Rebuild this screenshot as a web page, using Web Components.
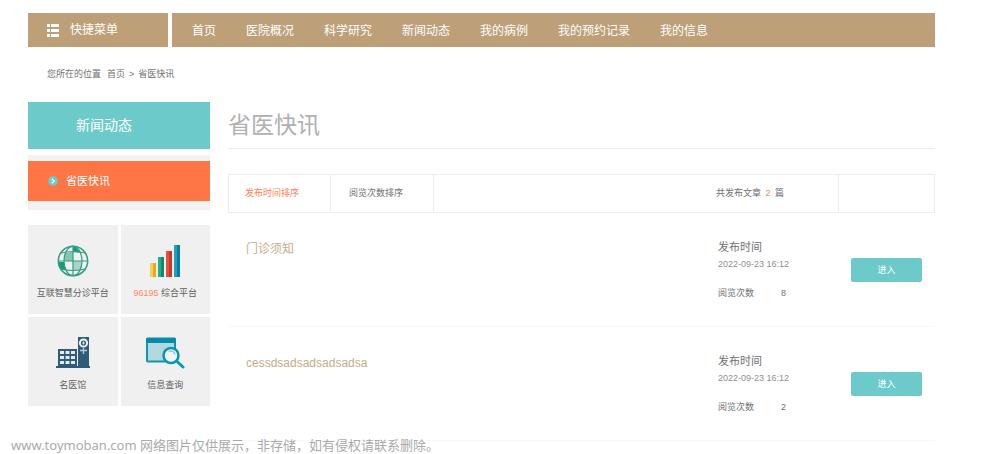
<!DOCTYPE html>
<html lang="zh-CN">
<head>
<meta charset="utf-8">
<meta name="viewport" content="width=device-width, initial-scale=1">
<title>省医快讯</title>
<style>
  body {
    margin: 0;
    background: #fff;
    --tan: #bda078;
    --teal: #6ccbca;
    --orange: #ff7646;
    --panel: #f0f0f0;
    --line: #ededed;
    font: 9px/16px "Liberation Sans", "Noto Sans CJK SC", sans-serif;
    color: #707070;
  }
</style>
</head>
<body>
<hospital-page>
  <top-bar slot="header"></top-bar>
  <bread-crumb slot="header"></bread-crumb>
  <side-menu slot="side" heading="新闻动态"><a href="#news">省医快讯</a></side-menu>
  <tile-grid slot="side">
    <service-tile icon="globe">互联智慧分诊平台</service-tile>
    <service-tile icon="bars"><b>96195</b> 综合平台</service-tile>
    <service-tile icon="clinic">名医馆</service-tile>
    <service-tile icon="search">信息查询</service-tile>
  </tile-grid>
  <page-title>省医快讯</page-title>
  <sort-bar total="2"></sort-bar>
  <news-item date="2022-09-23 16:12" views="8">门诊须知</news-item>
  <news-item date="2022-09-23 16:12" views="2">cessdsadsadsadsadsa</news-item>
  <site-note slot="note">www.toymoban.com 网络图片仅供展示，非存储，如有侵权请联系删除。</site-note>
</hospital-page>

<script>
const define = (name, render) => customElements.define(name, class extends HTMLElement {
  connectedCallback() {
    if (this.shadowRoot) return;
    const template = document.createElement('template');
    template.innerHTML = render(this);
    this.attachShadow({ mode: 'open' }).append(template.content.cloneNode(true));
  }
});

define('hospital-page', () => `
  <style>
    :host { display: block; position: relative; min-height: 100vh; box-sizing: border-box; padding: 13px 65px 0 28px; }
    .columns { display: grid; grid-template-columns: 182px minmax(0, 1fr); gap: 18px; align-items: start; }
  </style>
  <header><slot name="header"></slot></header>
  <div class="columns">
    <aside><slot name="side"></slot></aside>
    <main><slot></slot></main>
  </div>
  <slot name="note"></slot>`);

define('top-bar', () => `
  <style>
    :host { display: grid; grid-template-columns: 140px minmax(0, 1fr); gap: 4px; font-size: 12px; line-height: 34px; color: #fff; }
    button { display: flex; align-items: center; gap: 11px; padding: 0 19px; border: 0; background: var(--tan); color: inherit; font: inherit; text-align: left; }
    nav { display: flex; gap: 30px; padding: 2px 20px 0; background: var(--tan); white-space: nowrap; }
    nav a { color: inherit; text-decoration: none; line-height: 32px; }
  </style>
  <button type="button">
    <svg width="12" height="13" viewBox="0 0 12 13" fill="#fff" aria-hidden="true"><path d="M0 0h3v3H0zM4 0h8v3H4zM0 5h3v3H0zM4 5h8v3H4zM0 10h3v3H0zM4 10h8v3H4z"/></svg>
    <span>快捷菜单</span>
  </button>
  <nav>${['首页', '医院概况', '科学研究', '新闻动态', '我的病例', '我的预约记录', '我的信息']
    .map(t => `<a href="#">${t}</a>`).join('')}</nav>`);

define('bread-crumb', () => `
  <style>
    :host { display: block; padding: 0 19px; line-height: 55px; }
    nav { display: flex; gap: 4px; }
    span:first-child { margin-right: 2px; }
    a { color: inherit; text-decoration: none; }
  </style>
  <nav><span>您所在的位置</span><a href="#">首页</a><span>&gt;</span><a href="#">省医快讯</a></nav>`);

define('side-menu', el => `
  <style>
    :host { display: block; }
    h2 { margin: 0 0 6px; padding-left: 48px; background: var(--teal); color: #fff; font-size: 14px; font-weight: 400; line-height: 47px; }
    .list { padding: 6px 0 9px; background: #f2f2f2; }
    .item { display: flex; align-items: center; gap: 8px; padding: 0 20px; background: var(--orange); color: #fff; font-size: 11px; line-height: 40px; }
    ::slotted(a) { color: inherit; text-decoration: none; }
  </style>
  <h2>${el.getAttribute('heading')}</h2>
  <div class="list"><div class="item">
    <svg width="10" height="10" viewBox="0 0 10 10" aria-hidden="true"><circle cx="5" cy="5" r="4.8" fill="#6ccbca"/><path d="M3.8 2.7 6.2 5 3.8 7.3" fill="none" stroke="#fff" stroke-width="1.3"/></svg>
    <slot></slot>
  </div></div>`);

define('tile-grid', () => `
  <style>
    :host { display: grid; grid-template-columns: 1fr 1fr; gap: 3px; margin-top: 15px; }
  </style>
  <slot></slot>`);

const icons = {
  globe: `<svg width="32" height="32" viewBox="0 0 32 32" fill="none" stroke="#2f9f82" stroke-width="1.2">
    <path d="M8.500 8Q12 7 16 7v9H7Q7 12 8.500 8z" fill="#86c5b2" stroke="none"/>
    <path d="M16 16h9q0 5-1.500 8-3 1-7.500 1z" fill="#a9d4c7" stroke="none"/>
    <path d="M16 1q5 2 7 7-3-1-7-1zM1 17h6q0 4 2 7l-5 1q-3-4-3-8z" fill="#1c9878" stroke="none"/>
    <circle cx="16" cy="16" r="14.7" stroke-width="1.5"/>
    <ellipse cx="16" cy="16" rx="9" ry="14.7"/>
    <path d="M16 1v30M1 16h30M4 8q12-3 24 0M4 24q12 3 24 0"/></svg>`,
  bars: `<svg width="32" height="34" viewBox="0 0 32 34">
    <path d="M1 19h3v14H1z" fill="#f6cf57"/><path d="M4 19h3v14H4z" fill="#e7a922"/>
    <path d="M9 13h3v20H9z" fill="#28ac8b"/><path d="M12 13h3v20h-3z" fill="#128c70"/>
    <path d="M17 7h3v26h-3z" fill="#e65240"/><path d="M20 7h3v26h-3z" fill="#c53c2d"/>
    <path d="M25 1h3v32h-3z" fill="#259fbd"/><path d="M28 1h3v32h-3z" fill="#087da1"/></svg>`,
  clinic: `<svg width="34" height="34" viewBox="0 0 34 34">
    <path d="M2 13h19v17H2zM22 1h11v29H22zM0 30h34v2H0z" fill="#2f5b79"/>
    <path d="M4 15h4v3H4zM9.500 15h4v3h-4zM15 15h4v3h-4zM4 20h4v3H4zM9.500 20h4v3h-4zM15 20h4v3h-4zM4 25h4v3H4zM9.500 25h4v3h-4zM15 25h4v3h-4z" fill="#e4e9ec"/>
    <circle cx="27.500" cy="7" r="3.600" fill="none" stroke="#f0f0f0" stroke-width="2"/>
    <path d="M27.500 5.500v3M26 7h3" stroke="#d5dfe5"/>
    <path d="M24 14.500h7M27.500 12v6" stroke="#b9cbd5" stroke-width="1.300"/></svg>`,
  search: `<svg width="40" height="34" viewBox="0 0 40 34">
    <rect x="2" y="3" width="28" height="22.500" rx="1" fill="#b3d8df" stroke="#0d96b2" stroke-width="2"/>
    <path d="M1 3q0-1.500 1.500-1.500h27Q31 1.500 31 3v4H1z" fill="#058cab"/><path d="M4 4h8" stroke="#0776a0" stroke-dasharray="2 1"/>
    <path d="M31.500 25l6.500 6" stroke="#079abb" stroke-width="3" stroke-linecap="round"/>
    <circle cx="26" cy="19.500" r="7.500" fill="#f0f5f6" stroke="#0995b4" stroke-width="2.500"/>
    <path d="M23.500 15.500q5-2 6.500 3" fill="none" stroke="#98cbd6" stroke-width="1.500"/></svg>`
};

define('service-tile', el => `
  <style>
    :host { display: block; background: var(--panel); color: #606060; }
    a { display: flex; flex-direction: column; align-items: center; padding: 19px 0 14px; color: inherit; text-decoration: none; white-space: nowrap; line-height: 14px; }
    .icon { display: flex; align-items: center; height: 34px; margin-bottom: 8px; }
    ::slotted(b) { color: #ff8a65; font-weight: 400; }
  </style>
  <a href="#"><span class="icon" aria-hidden="true">${icons[el.getAttribute('icon')]}</span><span><slot></slot></span></a>`);

define('page-title', () => `
  <style>
    :host { display: block; margin-bottom: 25px; border-bottom: 1px solid var(--line); }
    h1 { margin: 0; color: #b0b0b0; font-size: 23px; font-weight: 400; line-height: 46px; }
  </style>
  <h1><slot></slot></h1>`);

define('sort-bar', el => `
  <style>
    :host { display: grid; grid-template-columns: 102px 103px minmax(0, 1fr) 95px; border: 1px solid var(--line); line-height: 37px; }
    button { padding: 0 16px; border: 0; border-right: 1px solid var(--line); background: none; color: inherit; font: inherit; text-align: left; }
    button[aria-pressed=true] { color: #ff8056; }
    button[aria-pressed=false] { padding-left: 18px; }
    .total { display: grid; grid-template-columns: 1fr 122px; border-right: 1px solid var(--line); }
    .total span { grid-column: 2; }
    b { margin: 0 2px; color: #ff8056; font-weight: 400; }
  </style>
  <button type="button" aria-pressed="true">发布时间排序</button>
  <button type="button" aria-pressed="false">阅览次数排序</button>
  <div class="total"><span>共发布文章 <b>${el.getAttribute('total')}</b> 篇</span></div>`);

define('news-item', el => `
  <style>
    :host { display: grid; grid-template-columns: minmax(0, 1fr) 133px 71px; padding: 0 13px 0 18px; border-bottom: 1px solid #f8f8f8; }
    h3 { margin: 25px 0 0; color: #c8ab88; font-size: 12px; font-weight: 400; line-height: 22px; }
    dl { margin: 25px 0; }
    dt, dd { margin: 0; }
    .time { font-size: 11px; line-height: 18px; }
    .date { margin-bottom: 13px; color: #909090; }
    .views { display: flex; gap: 27px; }
    button { align-self: center; height: 24px; padding: 0; border: 0; border-radius: 2px; background: var(--teal); color: #fff; font: inherit; }
  </style>
  <h3><slot></slot></h3>
  <dl>
    <dt class="time">发布时间</dt><dd class="date">${el.getAttribute('date')}</dd>
    <div class="views"><dt>阅览次数</dt><dd>${el.getAttribute('views')}</dd></div>
  </dl>
  <button type="button">进入</button>`);

define('site-note', () => `
  <style>
    :host { position: absolute; left: 11px; bottom: 0; color: #aaa; font: 13px/17px "Noto Sans", "Noto Sans CJK SC", sans-serif; }
  </style>
  <slot></slot>`);
</script>
</body>
</html>
